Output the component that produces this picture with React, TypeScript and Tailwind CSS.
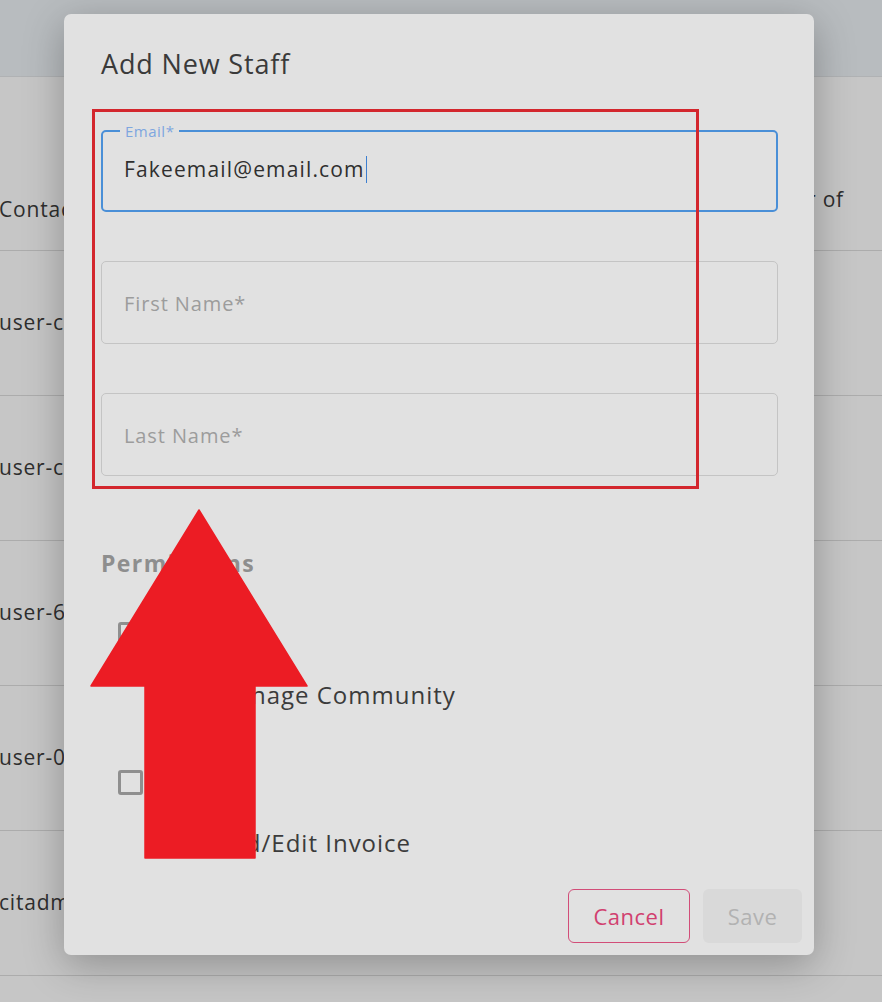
import React from "react";

const font = { fontFamily: '"Open Sans", "Noto Sans", sans-serif' };

const rows = ["user-c", "user-c", "user-6", "user-0", "citadm"];

function Background() {
  return (
    <div className="w-[882px] h-[1002px] flex flex-col bg-[#c6c6c6] overflow-hidden">
      <div className="h-[77px] bg-[#b8bcbf] border-b border-[#b0b2b4]" />
      <div className="h-[174px] flex items-end justify-between pb-[25px] border-b border-[#acacac] text-[21px] tracking-[0.8px] text-[#2e2e2e]">
        <span className="-ml-[1px]">Contact</span>
        <span className="pr-[38px] mb-[10px]">Number of</span>
      </div>
      {rows.map((r, i) => (
        <div
          key={i}
          className="h-[145px] shrink-0 flex items-center border-b border-[#acacac] text-[21px] tracking-[0.8px] text-[#2e2e2e]"
        >
          <span className="-ml-[1px]">{r}</span>
        </div>
      ))}
    </div>
  );
}

function Field({ placeholder }: { placeholder: string }) {
  return (
    <div className="h-[83px] rounded-[5px] border border-[#c4c4c4] flex items-center px-[22px] pt-[2px]">
      <span className="text-[20px] tracking-[0.9px] text-[#9c9c9c]">{placeholder}</span>
    </div>
  );
}

function Check({ label }: { label: string }) {
  return (
    <div className="flex flex-col">
      <div className="ml-[17px] w-[25px] h-[25px] rounded-[3px] border-[3px] border-[#8f8f8f]" />
      <div className="mt-[33px] ml-[113px] text-[24px] leading-[30px] tracking-[1px] text-[#3b3b3b]">
        {label}
      </div>
    </div>
  );
}

function Modal() {
  return (
    <div className="absolute left-[64px] top-[14px] w-[750px] h-[941px] rounded-[7px] bg-[#e1e1e1] shadow-[0_10px_40px_rgba(0,0,0,0.28)] flex flex-col px-[37px]">
      <h2 className="mt-[33px] text-[27px] leading-[34px] text-[#3a3a3a] tracking-[0.85px]">
        Add New Staff
      </h2>

      <div className="mt-[49px] w-[677px] flex flex-col gap-[49px]">
        <div className="relative h-[82px] rounded-[5px] border-2 border-[#4a8fd7] flex items-center px-[21px] pb-[3px]">
          <span className="absolute -top-[10px] left-[17px] px-[5px] bg-[#e1e1e1] text-[15px] leading-[18px] tracking-[0.5px] text-[#7ea6df]">
            Email*
          </span>
          <span className="text-[21px] tracking-[1.15px] text-[#2f2f2f]">Fakeemail@email.com</span>
          <span className="ml-[1px] w-[1px] h-[27px] bg-[#3d7fd0]" />
        </div>
        <Field placeholder="First Name*" />
        <Field placeholder="Last Name*" />
      </div>

      <div className="mt-[72px] text-[23px] leading-[30px] font-bold tracking-[1.4px] text-[#8e8e8e]">
        Permissions
      </div>

      <div className="mt-[44px] flex flex-col gap-[60px]">
        <Check label="Manage Community" />
        <Check label="Add/Edit Invoice" />
      </div>

      <div className="mt-auto mb-[12px] -mr-[25px] flex justify-end gap-[13px]">
        <button className="w-[122px] h-[54px] rounded-[6px] border border-[#d24d78] text-[22px] tracking-[0.5px] text-[#d1406f]">
          Cancel
        </button>
        <button className="w-[99px] h-[54px] rounded-[6px] bg-[#d9d9d9] text-[22px] tracking-[0.5px] text-[#b2b2b2]">
          Save
        </button>
      </div>
    </div>
  );
}

function Annotation() {
  return (
    <svg className="absolute left-0 top-0 pointer-events-none" width="882" height="1002">
      <rect x="93.5" y="110.5" width="604" height="377" fill="none" stroke="#d3262d" strokeWidth="3" />
      <polygon
        points="199,510 307,686 255,686 255,858 145,858 145,686 91,686"
        fill="#ec1c24"
        strokeLinejoin="round"
        stroke="#ec1c24"
        strokeWidth="1.5"
      />
    </svg>
  );
}

export default function App() {
  return (
    <div className="relative w-[882px] h-[1002px] overflow-hidden" style={font}>
      <Background />
      <Modal />
      <Annotation />
    </div>
  );
}
